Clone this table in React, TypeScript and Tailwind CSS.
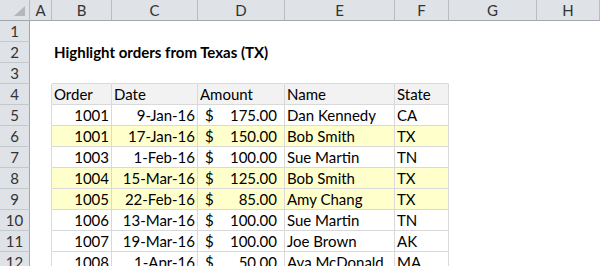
import React from "react";

const COLS = ["A", "B", "C", "D", "E", "F", "G", "H"];

type Row = { order: string; date: string; amount: string; name: string; state: string };

const DATA: Row[] = [
  { order: "1001", date: "9-Jan-16", amount: "175.00", name: "Dan Kennedy", state: "CA" },
  { order: "1001", date: "17-Jan-16", amount: "150.00", name: "Bob Smith", state: "TX" },
  { order: "1003", date: "1-Feb-16", amount: "100.00", name: "Sue Martin", state: "TN" },
  { order: "1004", date: "15-Mar-16", amount: "125.00", name: "Bob Smith", state: "TX" },
  { order: "1005", date: "22-Feb-16", amount: "85.00", name: "Amy Chang", state: "TX" },
  { order: "1006", date: "13-Mar-16", amount: "100.00", name: "Sue Martin", state: "TN" },
  { order: "1007", date: "19-Mar-16", amount: "100.00", name: "Joe Brown", state: "AK" },
  { order: "1008", date: "1-Apr-16", amount: "50.00", name: "Ava McDonald", state: "MA" },
];

function cellContent(r: number, c: number): React.ReactNode {
  if (r === 2 && c === 1) {
    return (
      <span className="whitespace-nowrap pl-[2px] font-bold">Highlight orders from Texas (TX)</span>
    );
  }
  if (r === 4 && c >= 1 && c <= 5) {
    const h = ["Order", "Date", "Amount", "Name", "State"][c - 1];
    return <span className="pl-[2px]">{h}</span>;
  }
  if (r >= 5 && c >= 1 && c <= 5) {
    const d = DATA[r - 5];
    if (c === 1) return <span className="ml-auto pr-[2px]">{d.order}</span>;
    if (c === 2) return <span className="ml-auto pr-[2px]">{d.date}</span>;
    if (c === 3)
      return (
        <span className="flex w-full justify-between pl-[7px] pr-[7px]">
          <span>$</span>
          <span>{d.amount}</span>
        </span>
      );
    if (c === 4) return <span className="whitespace-nowrap pl-[2px]">{d.name}</span>;
    if (c === 5) return <span className="pl-[2px]">{d.state}</span>;
  }
  return null;
}

function cellClass(r: number, c: number): string {
  const inTable = r >= 4 && c >= 1 && c <= 5;
  const base = "relative flex h-[21px] items-end border-r border-b leading-[20px] ";
  let border = "border-transparent";
  if (inTable) border = "border-[#d9d9d9]";
  else if (c === 0 && r >= 4) border = "border-r-[#d9d9d9] border-b-transparent";
  else if (r === 3 && c >= 1 && c <= 5) border = "border-b-[#d9d9d9] border-r-transparent";
  let bg = "bg-white";
  if (inTable) {
    if (r === 4) bg = "bg-[#f2f2f2]";
    else if (DATA[r - 5].state === "TX") bg = "bg-[#ffffcc]";
  }
  const overflow = r === 2 && c === 1 ? "z-10 overflow-visible" : "overflow-hidden";
  return base + border + " " + bg + " " + overflow;
}

export default function App() {
  const rows = Array.from({ length: 12 }, (_, i) => i + 1);
  return (
    <div className="h-[266px] w-[600px] overflow-hidden bg-white font-['Lato','Noto_Sans',sans-serif] text-[15px] text-black">
      <div className="grid grid-cols-[30px_22px_60px_86px_87px_110px_54px_88px_1fr] auto-rows-[21px]">
        {/* corner */}
        <div className="relative h-[21px] border-r border-b border-r-[#b9bdc2] border-b-[#a3a7ac] bg-[#dfe2e6]">
          <svg className="absolute left-0 top-0" width="29" height="20" viewBox="0 0 29 20">
            <polygon points="25,6 25,16 14,16" fill="#b4b8bc" />
          </svg>
        </div>
        {COLS.map((l) => (
          <div
            key={l}
            className="flex h-[21px] items-end justify-center border-r border-b border-r-[#b9bdc2] border-b-[#a3a7ac] bg-[#dfe2e6] leading-[20px] text-[#333]"
          >
            {l}
          </div>
        ))}
        {rows.map((r) => (
          <React.Fragment key={r}>
            <div className="flex h-[21px] items-end justify-center border-r border-b border-r-[#a3a7ac] border-b-[#c4c8cd] bg-[#dfe2e6] leading-[20px] text-[#333]">
              {r}
            </div>
            {COLS.map((_, c) => (
              <div key={c} className={cellClass(r, c)}>
                {cellContent(r, c)}
              </div>
            ))}
          </React.Fragment>
        ))}
      </div>
    </div>
  );
}
